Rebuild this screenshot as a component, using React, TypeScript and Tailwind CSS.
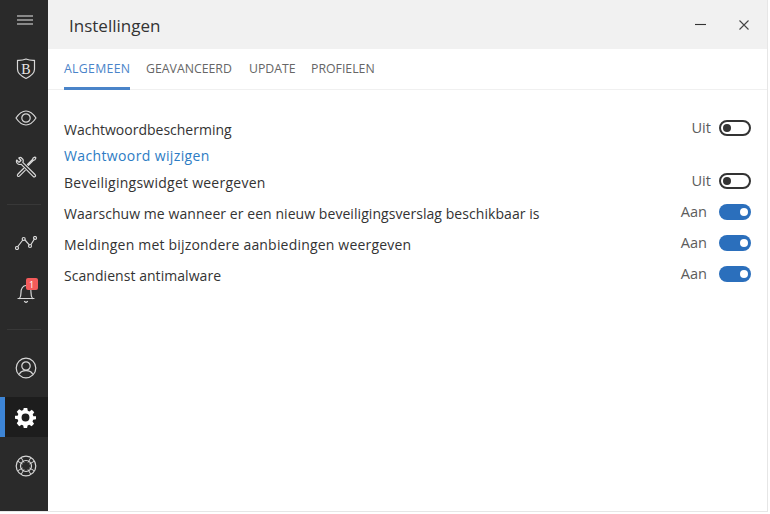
import React from "react";

const F = { fontFamily: '"Open Sans", "Noto Sans", sans-serif' };

function NavIcon({ children, active }: { children: React.ReactNode; active?: boolean }) {
  return (
    <div className={`relative flex h-10 w-12 shrink-0 items-center justify-center pl-[3px] ${active ? "bg-[#1d1d1d]" : ""}`}>
      {active && <div className="absolute left-0 top-0 h-10 w-[5px] bg-[#3d85d6]" />}
      {children}
    </div>
  );
}

const S = { fill: "none", stroke: "#d8d8d8", strokeWidth: 1.2, strokeLinecap: "round" as const, strokeLinejoin: "round" as const };

function Toggle({ on }: { on?: boolean }) {
  return on ? (
    <div className="flex h-4 w-8 items-center justify-end rounded-full bg-[#2b6fbc] pr-[3px]">
      <div className="h-2 w-2 rounded-full bg-white" />
    </div>
  ) : (
    <div className="flex h-4 w-8 items-center rounded-full border-2 border-[#333333] pl-[2px]">
      <div className="h-2 w-2 rounded-full bg-[#333333]" />
    </div>
  );
}

function Row({ label, on, className, track }: { label: string; on?: boolean; className: string; track: string }) {
  return (
    <div className={`flex items-center justify-between ${className}`}>
      <span className={`text-[14px] text-[#333333] ${track}`}>{label}</span>
      <div className="flex items-center pb-[2px]">
        <span className="pb-[1px] text-[14.6px] text-[#5c5c5c]">{on ? "Aan" : "Uit"}</span>
        <div className={on ? "ml-[12px]" : "ml-[8px]"}><Toggle on={on} /></div>
      </div>
    </div>
  );
}

export default function App() {
  return (
    <div className="h-[514px] w-[770px] bg-white" style={F}>
      <div className="flex h-[512px] w-[768px] border-b border-r border-[#e6e6e6]">
        <aside className="flex w-12 shrink-0 flex-col bg-[#2a2a2a]">
          <div className="flex h-[40px] items-center justify-center pl-[2px]">
            <svg width="16" height="10" viewBox="0 0 16 10"><path d="M0 1h16M0 5h16M0 9h16" stroke="#a8a8a8" strokeWidth="1.6" /></svg>
          </div>
          <div className="mt-[9px]"><NavIcon>
            <svg width="20" height="22" viewBox="0 0 20 22">
              <path d="M10 1c3 1.200 5.500 1.500 8.500 1.300v9c0 4-3.500 6.800-8.500 9.200-5-2.400-8.500-5.200-8.500-9.200v-9C4.500 2.500 7 2.200 10 1z" {...S} />
              <text x="10" y="15.500" textAnchor="middle" fontSize="14" fill="#e8e8e8" fontFamily="Liberation Serif, serif">B</text>
            </svg>
          </NavIcon></div>
          <div className="mt-[9px]"><NavIcon>
            <svg width="22" height="16" viewBox="0 0 22 16">
              <path d="M1 8c3-4.500 6.200-7 10-7s7 2.500 10 7c-3 4.500-6.200 7-10 7S4 12.500 1 8z" {...S} />
              <circle cx="11" cy="8" r="4.200" {...S} />
            </svg>
          </NavIcon></div>
          <div className="mt-[9px]"><NavIcon>
            <svg width="22" height="22" viewBox="0 0 22 22">
              <path d="M6 1.500 8 3.500c.4 1 .3 2-.2 2.800L20 18.500c.8 1 .7 1.600.1 2.100-.6.500-1.300.5-2-.3L6 8.200c-1.200.5-2.500.3-3.500-.6C1.500 6.600 1.200 5.200 1.700 4l2.300 2.300L6 4.500 3.800 2C4.500 1.500 5.300 1.400 6 1.500z" {...S} />
              <path d="M12.500 8.500 17.500 3.500l.6-1.500 1.800-1 1 1-1 1.800-1.500.6-5 5M8.500 12.500 3 18c-.8.800-.8 1.500-.3 2.100.6.600 1.300.5 2-.2l5.500-5.500" {...S} />
            </svg>
          </NavIcon></div>
          <div className="mx-[7px] mt-[17px] h-px bg-[#383838]" />
          <div className="mt-[18px]"><NavIcon>
            <svg width="22" height="14" viewBox="0 0 22 14">
              <path d="m2.800 10.500 5-6.500M10 4l4.300 4.800M16 8.500l3.400-5.500" {...S} />
              <circle cx="2" cy="12" r="1.500" {...S} /><circle cx="8.700" cy="3" r="1.500" {...S} /><circle cx="15" cy="10" r="1.500" {...S} /><circle cx="20" cy="2" r="1.500" {...S} />
            </svg>
          </NavIcon></div>
          <div className="mt-[9px]"><NavIcon>
            <div className="relative">
              <svg width="20" height="22" viewBox="0 0 20 22" className="block">
                <path d="M2 17.500h16M3.500 17.500c1.200-1.500 1.500-3 1.500-6 0-4 2-7 5-7s5 3 5 7c0 3 .3 4.500 1.500 6" {...S} />
                <path d="M8.500 20.500 10 21.500l1.500-1" {...S} />
              </svg>
              <div className="absolute right-[-2px] top-[-3px] flex h-3 w-3 items-center justify-center rounded-[2px] bg-[#f45b5b] text-[9px] leading-none text-white">1</div>
            </div>
          </NavIcon></div>
          <div className="mx-[7px] mt-[17px] h-px bg-[#383838]" />
          <div className="mt-[18px]"><NavIcon>
            <svg width="22" height="22" viewBox="0 0 22 22">
              <circle cx="11" cy="11" r="9.800" {...S} />
              <circle cx="11" cy="9" r="4.200" {...S} />
              <path d="M4.500 17c1-2.400 3.500-3.300 6.500-3.300s5.500.9 6.500 3.300" {...S} />
            </svg>
          </NavIcon></div>
          <div className="mt-[9px]"><NavIcon active>
            <svg width="21" height="21" viewBox="0 0 24 24">
              <path fill="#ffffff" fillRule="evenodd" d="M10 1h4l.6 3.200 1.900.8 2.700-1.800 2.800 2.800-1.800 2.700.8 1.900L24 10.500v3.500l-3.200.6-.8 1.900 1.800 2.700-2.800 2.800-2.700-1.800-1.900.8-.6 3H10l-.6-3-1.900-.8-2.700 1.800L2 18.700l1.800-2.700-.8-1.900L0 13.500V10l3-.1.800-1.900L2 5.300 4.800 2.500l2.700 1.800 1.900-.8L10 1zM12 7.500a4.500 4.500 0 1 0 0 9 4.500 4.500 0 0 0 0-9z" />
            </svg>
          </NavIcon></div>
          <div className="mt-[9px]"><NavIcon>
            <svg width="22" height="22" viewBox="0 0 22 22">
              <circle cx="11" cy="11" r="9.800" {...S} />
              <circle cx="11" cy="11" r="5.500" {...S} />
              <path d="M3.200 6.500 7.200 8.800M6.500 3.200 8.800 7.200M18.800 6.500 14.800 8.800M15.500 3.200 13.200 7.200M3.200 15.500 7.200 13.200M6.500 18.800 8.800 14.800M18.800 15.500 14.800 13.200M15.500 18.800 13.200 14.800" {...S} strokeWidth={1} />
            </svg>
          </NavIcon></div>
        </aside>
        <main className="flex min-w-0 flex-1 flex-col">
          <header className="flex h-[49px] shrink-0 items-center justify-between bg-[#f1f1f1] pl-[21px] pr-[18px]">
            <h1 className="pt-[2px] text-[17px] font-normal text-[#333333]">Instellingen</h1>
            <div className="flex items-center gap-[33px]">
              <svg width="11" height="11" viewBox="0 0 11 11"><path d="M0 5.500h11" stroke="#333" strokeWidth="1.100" /></svg>
              <svg width="10" height="10" viewBox="0 0 10 10"><path d="m.5.500 9 9M9.500.500l-9 9" stroke="#444" strokeWidth="1.100" /></svg>
            </div>
          </header>
          <nav className="flex h-[41px] shrink-0 border-b border-[#f0f0f0] pl-4 text-[12.3px] text-[#666666]">
            <div className="flex h-[41px] w-[66px] items-center border-b-[3px] border-[#4a84c9] pt-[2px] tracking-[0.3px] text-[#4a84c9]">ALGEMEEN</div>
            <div className="ml-4 flex h-[38px] w-[87px] items-center pt-[2px]">GEAVANCEERD</div>
            <div className="ml-4 flex h-[38px] w-[46px] items-center pt-[2px]">UPDATE</div>
            <div className="ml-4 flex h-[38px] items-center pt-[2px]">PROFIELEN</div>
          </nav>
          <section className="flex flex-col pl-4 pr-4 pt-[27px]">
            <Row label="Wachtwoordbescherming" className="h-[24px]" track="" />
            <div className="mt-[2px] h-[26px] text-[14px] leading-[26px] tracking-[0.37px] text-[#2d7cc4]">Wachtwoord wijzigen</div>
            <Row label="Beveiligingswidget weergeven" className="h-[26px]" track="tracking-[0.25px]" />
            <Row label="Waarschuw me wanneer er een nieuw beveiligingsverslag beschikbaar is" on className="mt-[5px] h-[26px]" track="tracking-[0.06px]" />
            <Row label="Meldingen met bijzondere aanbiedingen weergeven" on className="mt-[5px] h-[26px]" track="tracking-[0.19px]" />
            <Row label="Scandienst antimalware" on className="mt-[5px] h-[26px]" track="tracking-[0.05px]" />
          </section>
        </main>
      </div>
    </div>
  );
}
